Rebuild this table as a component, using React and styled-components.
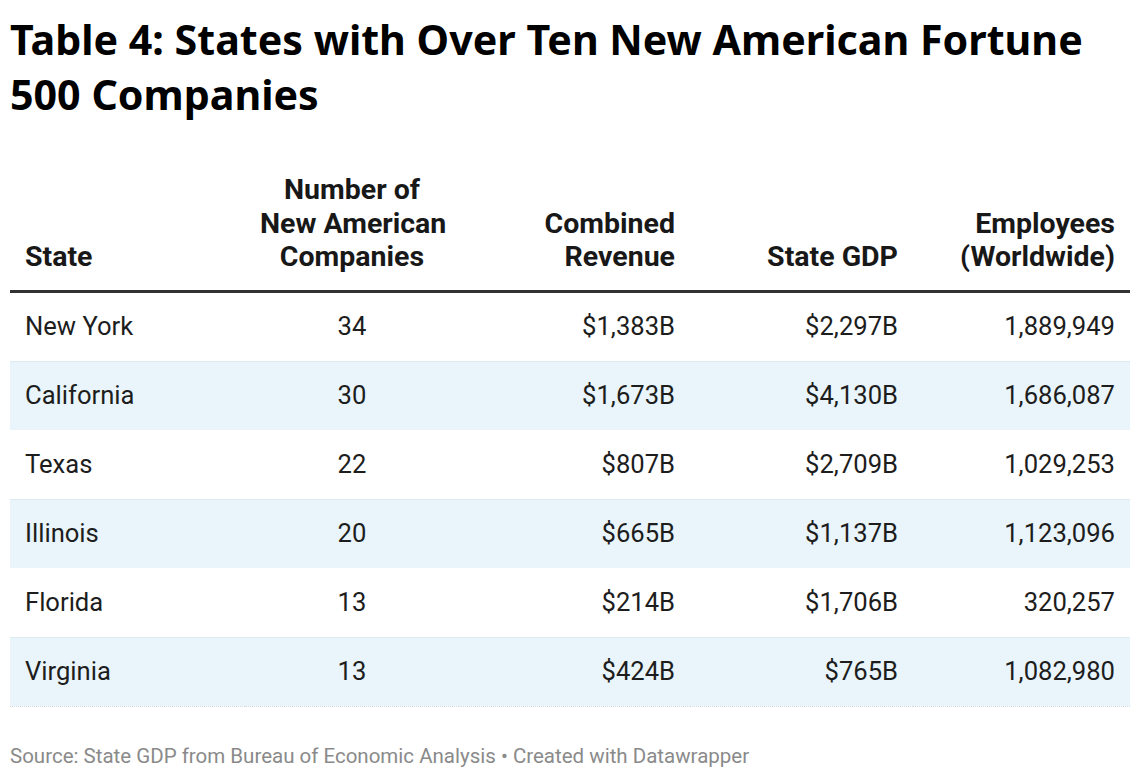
import React from "react";
import styled, { createGlobalStyle } from "styled-components";

const Global = createGlobalStyle`
  html, body { margin: 0; padding: 0; background: #fff; }
  body { font-family: Roboto, "Liberation Sans", sans-serif; color: #181818; }
`;

const Page = styled.div`
  padding: 12px 10px 0 10px;
  width: 1120px;
`;

const Title = styled.h1`
  margin: 0;
  font-family: "Noto Sans", "Open Sans", sans-serif;
  font-weight: 700;
  font-size: 41.2px;
  line-height: 55px;
  color: #000;
`;

const Table = styled.table`
  margin-top: 51px;
  width: 1120px;
  border-collapse: collapse;
  table-layout: fixed;
  font-size: 25.6px;
`;

const HeadCell = styled.th`
  font-weight: 700;
  font-size: 28.5px;
  line-height: 33.5px;
  vertical-align: bottom;
  white-space: nowrap;
  padding: 0 15px 16px;
  text-align: ${(p) => p.$align || "left"};
  color: #181818;
  border-bottom: 3px solid #333;
`;

const Row = styled.tr`
  background: ${(p) => (p.$striped ? "#e9f5fb" : "#fff")};
  border-top: 1px solid ${(p) => (p.$striped ? "#dcebf2" : "transparent")};
  border-bottom: 1px dotted ${(p) => (p.$striped ? "#d6dde0" : "transparent")};
`;

const Cell = styled.td`
  height: 68px;
  padding: 0 15px;
  line-height: 33px;
  text-align: ${(p) => p.$align || "left"};
  color: #1d1d1d;
  white-space: nowrap;
`;

const Source = styled.div`
  margin-top: 37px;
  font-size: 20.5px;
  color: #8a8a8a;
`;

const rows = [
  ["New York", "34", "$1,383B", "$2,297B", "1,889,949"],
  ["California", "30", "$1,673B", "$4,130B", "1,686,087"],
  ["Texas", "22", "$807B", "$2,709B", "1,029,253"],
  ["Illinois", "20", "$665B", "$1,137B", "1,123,096"],
  ["Florida", "13", "$214B", "$1,706B", "320,257"],
  ["Virginia", "13", "$424B", "$765B", "1,082,980"],
];

const aligns = ["left", "center", "right", "right", "right"];
const widths = [235, 214, 231, 223, 217];

export default function App() {
  return (
    <>
      <Global />
      <Page>
        <Title>
          Table 4: States with Over Ten New American Fortune 500 Companies
        </Title>
        <Table>
          <colgroup>
            {widths.map((w, i) => (
              <col key={i} style={{ width: w }} />
            ))}
          </colgroup>
          <thead>
            <tr>
              <HeadCell $align="left">State</HeadCell>
              <HeadCell $align="center">
                Number of
                <br />
                New American
                <br />
                Companies
              </HeadCell>
              <HeadCell $align="right">
                Combined
                <br />
                Revenue
              </HeadCell>
              <HeadCell $align="right">State GDP</HeadCell>
              <HeadCell $align="right">
                Employees
                <br />
                (Worldwide)
              </HeadCell>
            </tr>
          </thead>
          <tbody>
            {rows.map((r, i) => (
              <Row key={r[0]} $striped={i % 2 === 1}>
                {r.map((c, j) => (
                  <Cell key={j} $align={aligns[j]}>
                    {c}
                  </Cell>
                ))}
              </Row>
            ))}
          </tbody>
        </Table>
        <Source>
          Source: State GDP from Bureau of Economic Analysis • Created with Datawrapper
        </Source>
      </Page>
    </>
  );
}
